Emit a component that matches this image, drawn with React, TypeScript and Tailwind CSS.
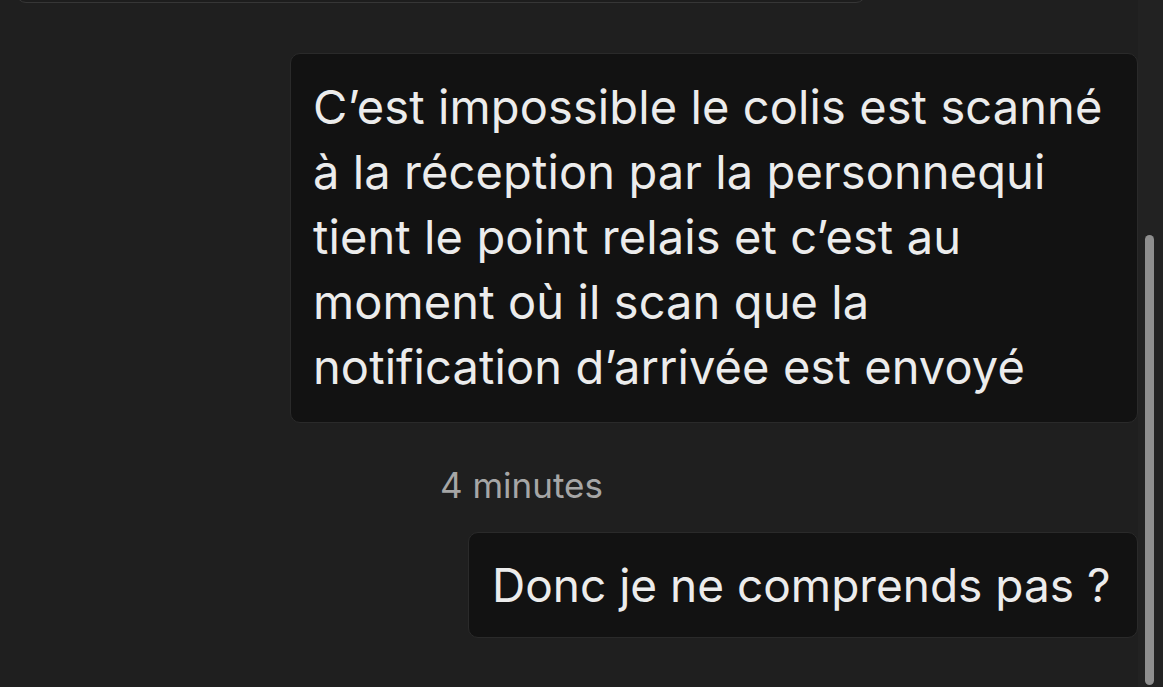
import React from "react";

const lines = [
  "C’est impossible le colis est scanné",
  "à la réception par la personnequi",
  "tient le point relais et c’est au",
  "moment où il scan que la",
  "notification d’arrivée est envoyé",
];

export default function App() {
  return (
    <div
      className="relative flex h-[687px] w-[1163px] overflow-hidden bg-[#1f1f1f]"
      style={{ fontFamily: "Inter, 'Noto Sans', sans-serif" }}
    >
      <div className="flex w-[1138px] flex-col">
        <div className="-mt-[37px] ml-[16px] h-[40px] w-[850px] rounded-b-[10px] border border-[#363636] bg-[#1d1d1d]" />

        <div className="ml-[290px] mt-[50px] w-[848px] rounded-[10px] border border-[#2a2a2a] bg-[#121212] pl-[22px] pt-[20px] pb-[23px]">
          {lines.map((l) => (
            <div
              key={l}
              className="whitespace-nowrap text-[47px] leading-[65px] tracking-[0.1px] text-[#ececec]"
            >
              {l}
            </div>
          ))}
        </div>

        <div className="ml-[440px] mt-[42px] text-[35px] leading-[40px] text-[#a6a6a6]">
          4 minutes
        </div>

        <div className="ml-auto mt-[27px] flex h-[106px] w-[670px] items-center rounded-[10px] border border-[#2a2a2a] bg-[#121212] pl-[23px]">
          <span className="whitespace-nowrap text-[46px] text-[#ececec]">
            Donc je ne comprends pas ?
          </span>
        </div>
      </div>

      <div className="flex-1 bg-[#222222]" />
      <div className="absolute right-[9px] top-[235px] h-[450px] w-[9px] rounded-full bg-[#8e8e8e]" />
    </div>
  );
}
